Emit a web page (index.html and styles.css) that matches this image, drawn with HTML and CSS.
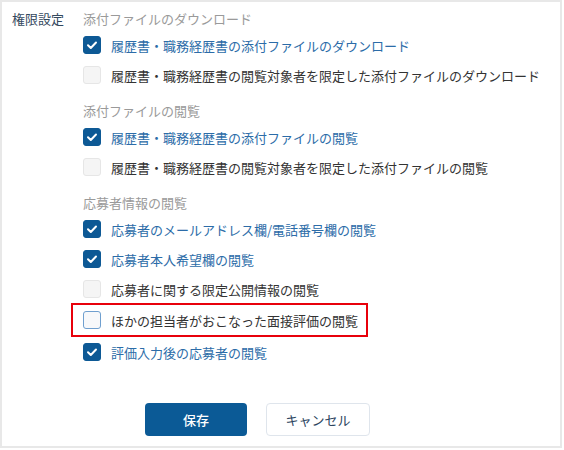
FILE: index.html
```html
<!DOCTYPE html>
<html lang="ja">
<head>
  <meta charset="UTF-8">
  <title>権限設定</title>
  <link rel="stylesheet" href="styles.css">
</head>
<body>
  <div class="panel">
    <div class="setting">
      <div class="setting-label">権限設定</div>
      <div class="setting-body">

        <div class="group">
          <div class="group-title">添付ファイルのダウンロード</div>
          <label class="item checked"><span class="box"><svg viewBox="0 0 18 18"><polyline points="5,9.3 7.8,12 13,6.5"/></svg></span>履歴書・職務経歴書の添付ファイルのダウンロード</label>
          <label class="item"><span class="box"></span>履歴書・職務経歴書の閲覧対象者を限定した添付ファイルのダウンロード</label>
        </div>

        <div class="group">
          <div class="group-title">添付ファイルの閲覧</div>
          <label class="item checked"><span class="box"><svg viewBox="0 0 18 18"><polyline points="5,9.3 7.8,12 13,6.5"/></svg></span>履歴書・職務経歴書の添付ファイルの閲覧</label>
          <label class="item"><span class="box"></span>履歴書・職務経歴書の閲覧対象者を限定した添付ファイルの閲覧</label>
        </div>

        <div class="group">
          <div class="group-title">応募者情報の閲覧</div>
          <label class="item checked"><span class="box"><svg viewBox="0 0 18 18"><polyline points="5,9.3 7.8,12 13,6.5"/></svg></span>応募者のメールアドレス欄/電話番号欄の閲覧</label>
          <label class="item checked"><span class="box"><svg viewBox="0 0 18 18"><polyline points="5,9.3 7.8,12 13,6.5"/></svg></span>応募者本人希望欄の閲覧</label>
          <label class="item"><span class="box"></span>応募者に関する限定公開情報の閲覧</label>
          <label class="item highlight"><span class="box"></span>ほかの担当者がおこなった面接評価の閲覧</label>
          <label class="item checked"><span class="box"><svg viewBox="0 0 18 18"><polyline points="5,9.3 7.8,12 13,6.5"/></svg></span>評価入力後の応募者の閲覧</label>
        </div>

      </div>
    </div>

    <div class="actions">
      <button class="btn btn-primary">保存</button>
      <button class="btn btn-secondary">キャンセル</button>
    </div>
  </div>
</body>
</html>
```

FILE: styles.css
```css
body {
  margin: 0;
  font-family: "Noto Sans CJK JP", "Noto Sans", sans-serif;
  font-size: 13px;
  color: #333;
  background: #fff;
}
.panel {
  box-sizing: border-box;
  width: 562px;
  height: 448px;
  border: 2px solid #e8e8e8;
  padding: 7px 10px 0 10px;
}
.setting {
  display: flex;
}
.setting-label {
  width: 71px;
  flex-shrink: 0;
  line-height: 20px;
  color: #34495e;
}
.group {
  margin-bottom: 11px;
}
.group:last-child {
  margin-bottom: 0;
}
.group-title {
  line-height: 20px;
  color: #9a9a9a;
  margin-bottom: 1px;
}
.item {
  display: flex;
  align-items: center;
  height: 30px;
  cursor: pointer;
}
.box {
  box-sizing: border-box;
  width: 18px;
  height: 18px;
  margin-right: 10px;
  border-radius: 3px;
  border: 1px solid #e6e6e6;
  background: #f5f5f5;
  flex-shrink: 0;
}
.box svg {
  display: block;
  width: 18px;
  height: 18px;
  margin: -1px;
}
.box polyline {
  fill: none;
  stroke: #fff;
  stroke-width: 2;
  stroke-linecap: round;
  stroke-linejoin: round;
}
.item.checked {
  color: #2c6ca8;
}
.item.checked .box {
  background: #0d5995;
  border-color: #0d5995;
}
.item.highlight {
  box-sizing: border-box;
  height: 34px;
  width: fit-content;
  margin: -1px 0 0 -12px;
  padding: 0 8px 0 10px;
  border: 2px solid #e8000b;
}
.item.highlight .box {
  border: 1.5px solid #6f9fcf;
  background: #f7f8fa;
}
.actions {
  display: flex;
  gap: 19px;
  margin-top: 36px;
  padding-left: 133px;
}
.btn {
  box-sizing: border-box;
  width: 102px;
  height: 33px;
  border-radius: 4px;
  font-family: inherit;
  font-size: 13px;
  cursor: pointer;
}
.btn-primary {
  background: #0b5a96;
  border: none;
  color: #fff;
  font-weight: 500;
}
.btn-secondary {
  width: 104px;
  background: #fff;
  border: 1px solid #dfe5ec;
  color: #2c4560;
}
```
